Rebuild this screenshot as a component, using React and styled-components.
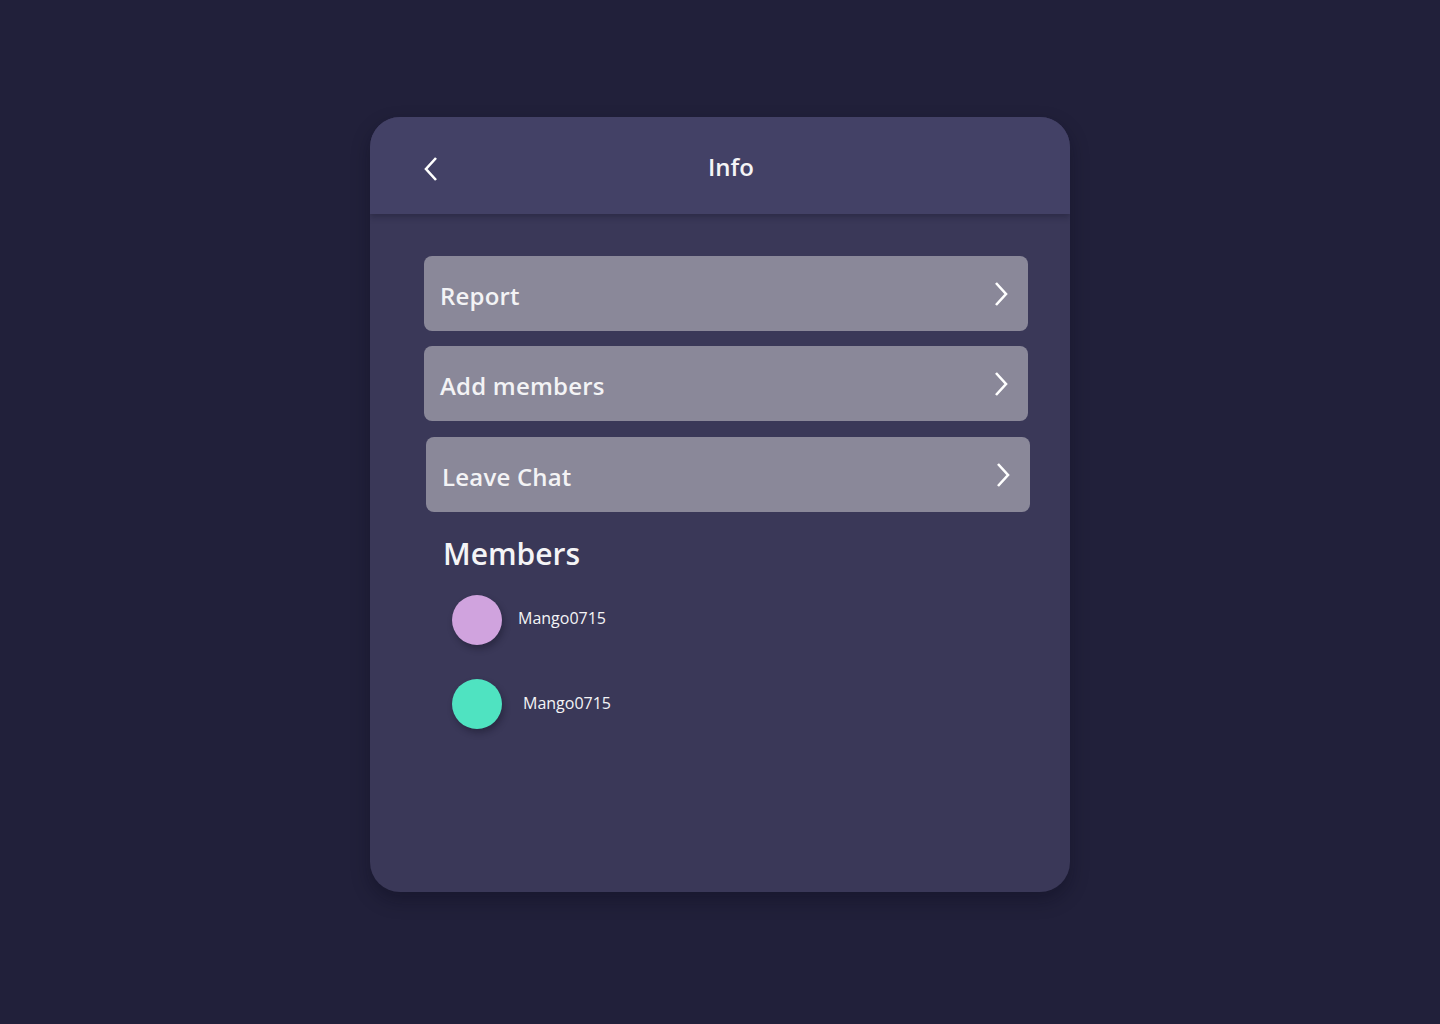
import React from "react";
import styled, { createGlobalStyle } from "styled-components";

const GlobalStyle = createGlobalStyle`
  html, body {
    margin: 0;
    padding: 0;
    background: #21203a;
    font-family: "Open Sans", "Lato", sans-serif;
  }
`;

const Page = styled.div`
  min-height: 1024px;
  display: flex;
  justify-content: center;
  align-items: flex-start;
  padding-top: 117px;
  box-sizing: border-box;
`;

const Card = styled.div`
  width: 700px;
  height: 775px;
  background: #3a3858;
  border-radius: 30px;
  overflow: hidden;
  box-shadow: 0 8px 18px rgba(10, 10, 25, 0.35);
  display: flex;
  flex-direction: column;
`;

const Header = styled.div`
  height: 97px;
  flex-shrink: 0;
  background: #434166;
  display: flex;
  align-items: center;
  position: relative;
  box-shadow: 0 3px 6px rgba(20, 20, 40, 0.35);
  z-index: 1;
`;

const BackButton = styled.button`
  background: none;
  border: none;
  padding: 0;
  margin-left: 49px;
  margin-top: 6px;
  width: 24px;
  height: 30px;
  display: flex;
  align-items: center;
  justify-content: center;
  cursor: pointer;
`;

const Title = styled.h1`
  position: absolute;
  left: 22px;
  right: 0;
  text-align: center;
  margin: 0;
  top: 33px;
  font-size: 24px;
  font-weight: 600;
  color: #f4f4f6;
  pointer-events: none;
`;

const Body = styled.div`
  padding: 42px 40px 0 54px;
  display: flex;
  flex-direction: column;
`;

const OptionRow = styled.div`
  width: 604px;
  height: 75px;
  box-sizing: border-box;
  margin-left: ${p => p.shift || 0}px;
  margin-bottom: ${p => p.gap}px;
  background: #8a8899;
  border-radius: 8px;
  display: flex;
  align-items: center;
  justify-content: space-between;
  padding: 0 19px 0 16px;
  cursor: pointer;
`;

const OptionLabel = styled.span`
  font-size: 24px;
  font-weight: 600;
  color: #f3f3f5;
  margin-top: 3px;
  letter-spacing: 0.2px;
`;

const Section = styled.h2`
  margin: 21px 0 0 19px;
  font-size: 30px;
  font-weight: 600;
  color: #f4f4f6;
`;

const MemberList = styled.div`
  margin: 21px 0 0 28px;
  display: flex;
  flex-direction: column;
  gap: 34px;
`;

const Member = styled.div`
  display: flex;
  align-items: center;
`;

const Avatar = styled.div`
  width: 50px;
  height: 50px;
  border-radius: 50%;
  background: ${p => p.color};
  box-shadow: 2px 4px 6px rgba(15, 15, 30, 0.35);
  flex-shrink: 0;
`;

const MemberName = styled.span`
  margin-left: ${p => p.offset}px;
  margin-top: ${p => p.lift}px;
  font-size: 16px;
  color: #f4f4f6;
`;

const Chevron = ({ dir = "right" }) => (
  <svg width="16" height="26" viewBox="0 0 16 26">
    <path
      d={dir === "right" ? "M3 2 L13 13 L3 24" : "M13 2 L3 13 L13 24"}
      fill="none"
      stroke="#ffffff"
      strokeWidth="2.6"
    />
  </svg>
);

const options = [
  { label: "Report", shift: 0, gap: 15 },
  { label: "Add members", shift: 0, gap: 16 },
  { label: "Leave Chat", shift: 2, gap: 0 }
];

const members = [
  { name: "Mango0715", color: "#d0a3de", offset: 16, lift: -4 },
  { name: "Mango0715", color: "#4fe3c1", offset: 21, lift: -2 }
];

const App = () => (
  <>
    <GlobalStyle />
    <Page>
      <Card>
        <Header>
          <BackButton aria-label="Back">
            <Chevron dir="left" />
          </BackButton>
          <Title>Info</Title>
        </Header>
        <Body>
          {options.map(opt => (
            <OptionRow key={opt.label} shift={opt.shift} gap={opt.gap}>
              <OptionLabel>{opt.label}</OptionLabel>
              <Chevron />
            </OptionRow>
          ))}
          <Section>Members</Section>
          <MemberList>
            {members.map((m, i) => (
              <Member key={i}>
                <Avatar color={m.color} />
                <MemberName offset={m.offset} lift={m.lift}>
                  {m.name}
                </MemberName>
              </Member>
            ))}
          </MemberList>
        </Body>
      </Card>
    </Page>
  </>
);

export default App;
